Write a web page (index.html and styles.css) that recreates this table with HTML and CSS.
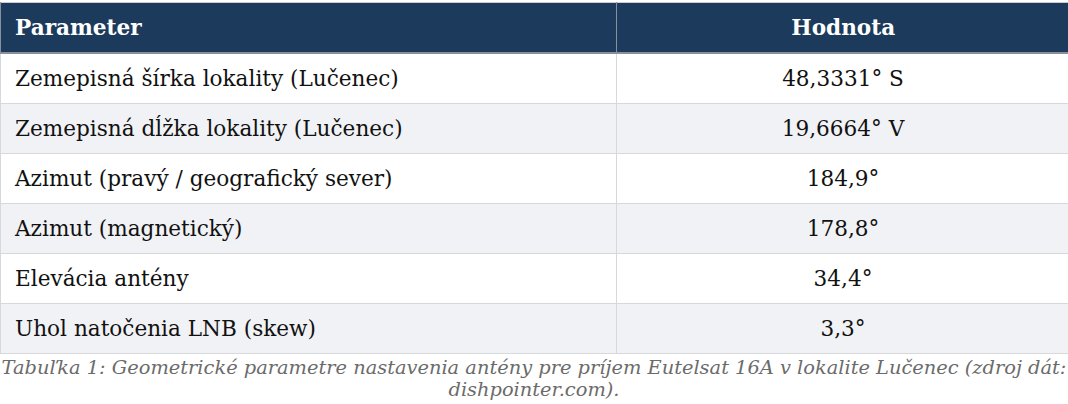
FILE: index.html
```html
<!DOCTYPE html>
<html lang="sk">
<head>
<meta charset="utf-8">
<title>Tabuľka 1</title>
<link rel="stylesheet" href="styles.css">
</head>
<body>
<figure class="fig">
<table class="params">
<thead>
<tr><th class="col-param">Parameter</th><th class="col-value">Hodnota</th></tr>
</thead>
<tbody>
<tr><td>Zemepisná šírka lokality (Lučenec)</td><td class="val">48,3331° S</td></tr>
<tr><td>Zemepisná dĺžka lokality (Lučenec)</td><td class="val">19,6664° V</td></tr>
<tr><td>Azimut (pravý / geografický sever)</td><td class="val">184,9°</td></tr>
<tr><td>Azimut (magnetický)</td><td class="val">178,8°</td></tr>
<tr><td>Elevácia antény</td><td class="val">34,4°</td></tr>
<tr><td>Uhol natočenia LNB (skew)</td><td class="val">3,3°</td></tr>
</tbody>
</table>
<figcaption class="caption">Tabuľka 1: Geometrické parametre nastavenia antény pre príjem Eutelsat 16A v lokalite Lučenec (zdroj dát: dishpointer.com).</figcaption>
</figure>
</body>
</html>
```
FILE: styles.css
```css
html, body {
  margin: 0;
  padding: 0;
  background: #ffffff;
}
body {
  font-family: "DejaVu Serif", serif;
  color: #111111;
  overflow: hidden;
}
.fig {
  margin: 0;
  padding-top: 2px;
  width: 1070px;
}
.params {
  width: 1070px;
  border-collapse: collapse;
  font-size: 21.6px;
  border-top: 1px solid #c8cbd0;
}
.params th {
  background: #1b3a5c;
  color: #ffffff;
  font-weight: bold;
  height: 49px;
  padding: 0 14px;
  border-left: 1px solid #8a9099;
  border-bottom: 2px solid #8a9099;
}
.col-param {
  text-align: left;
  width: 587px;
}
.col-value {
  text-align: center;
}
.params td {
  height: 49px;
  padding: 0 14px;
  border: 1px solid #d6d8dc;
}
.params tbody tr:nth-child(even) td {
  background: #f1f2f6;
}
.val {
  text-align: center;
}
.caption {
  margin: 0 0 0 -2px;
  padding: 3px 0 0;
  font-size: 19.4px;
  font-style: italic;
  color: #6b6b6b;
  text-align: center;
  line-height: 22px;
  width: 1072px;
}
```
